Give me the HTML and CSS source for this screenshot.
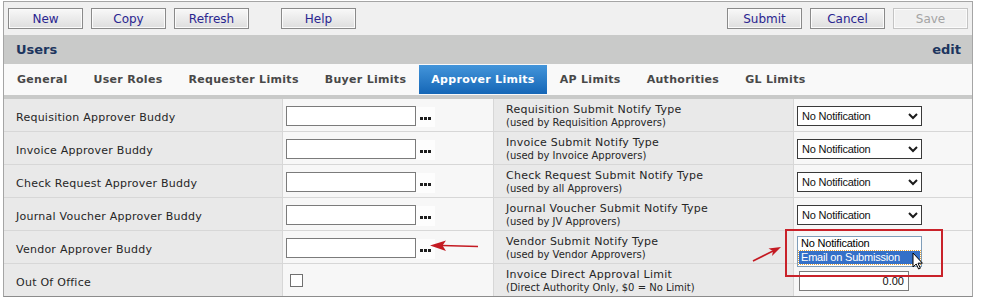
FILE: index.html
```html
<!DOCTYPE html>
<html lang="en">
  <head>
    <meta charset="UTF-8" />
    <meta name="viewport" content="width=device-width, initial-scale=1.0" />
    <title>Users - Approver Limits</title>
    <link rel="stylesheet" href="styles.css">
  </head>
  <body>
    <div class="frame">
      <div class="toolbar">
        <div class="btn-group">
          <button class="btn">New</button>
          <button class="btn">Copy</button>
          <button class="btn">Refresh</button>
          <button class="btn btn-help">Help</button>
        </div>
        <div class="btn-group">
          <button class="btn">Submit</button>
          <button class="btn">Cancel</button>
          <button class="btn" disabled>Save</button>
        </div>
      </div>

      <div class="title-bar">
        <span>Users</span>
        <span>edit</span>
      </div>

      <div class="tabs">
        <span class="tab">General</span>
        <span class="tab">User Roles</span>
        <span class="tab">Requester Limits</span>
        <span class="tab">Buyer Limits</span>
        <span class="tab active">Approver Limits</span>
        <span class="tab">AP Limits</span>
        <span class="tab">Authorities</span>
        <span class="tab">GL Limits</span>
      </div>

      <div class="form-grid">
        <div class="label">Requisition Approver Buddy</div>
        <div class="value">
          <input type="text" class="text-input" />
          <span class="lookup"><i></i><i></i><i></i></span>
        </div>
        <div class="label two-line">
          <span>Requisition Submit Notify Type</span>
          <small>(used by Requisition Approvers)</small>
        </div>
        <div class="value">
          <div class="select">No Notification <svg width="10" height="7" viewBox="0 0 10 7"><polyline points="1,1 5,5 9,1" /></svg></div>
        </div>

        <div class="label">Invoice Approver Buddy</div>
        <div class="value">
          <input type="text" class="text-input" />
          <span class="lookup"><i></i><i></i><i></i></span>
        </div>
        <div class="label two-line">
          <span>Invoice Submit Notify Type</span>
          <small>(used by Invoice Approvers)</small>
        </div>
        <div class="value">
          <div class="select">No Notification <svg width="10" height="7" viewBox="0 0 10 7"><polyline points="1,1 5,5 9,1" /></svg></div>
        </div>

        <div class="label">Check Request Approver Buddy</div>
        <div class="value">
          <input type="text" class="text-input" />
          <span class="lookup"><i></i><i></i><i></i></span>
        </div>
        <div class="label two-line">
          <span>Check Request Submit Notify Type</span>
          <small>(used by all Approvers)</small>
        </div>
        <div class="value">
          <div class="select">No Notification <svg width="10" height="7" viewBox="0 0 10 7"><polyline points="1,1 5,5 9,1" /></svg></div>
        </div>

        <div class="label">Journal Voucher Approver Buddy</div>
        <div class="value">
          <input type="text" class="text-input" />
          <span class="lookup"><i></i><i></i><i></i></span>
        </div>
        <div class="label two-line">
          <span>Journal Voucher Submit Notify Type</span>
          <small>(used by JV Approvers)</small>
        </div>
        <div class="value">
          <div class="select">No Notification <svg width="10" height="7" viewBox="0 0 10 7"><polyline points="1,1 5,5 9,1" /></svg></div>
        </div>

        <div class="label">Vendor Approver Buddy</div>
        <div class="value">
          <input type="text" class="text-input" />
          <span class="lookup"><i></i><i></i><i></i></span>
        </div>
        <div class="label two-line">
          <span>Vendor Submit Notify Type</span>
          <small>(used by Vendor Approvers)</small>
        </div>
        <div class="value open-cell">
          <ul class="listbox">
            <li>No Notification</li>
            <li class="selected">Email on Submission</li>
          </ul>
        </div>

        <div class="label">Out Of Office</div>
        <div class="value">
          <input type="checkbox" class="check" />
        </div>
        <div class="label two-line">
          <span>Invoice Direct Approval Limit</span>
          <small>(Direct Authority Only, $0 = No Limit)</small>
        </div>
        <div class="value">
          <input type="text" class="amount" value="0.00" />
        </div>
      </div>

      <!-- annotations drawn over the screenshot -->
      <div class="callout"></div>
      <svg class="marks" width="982" height="308" viewBox="0 0 982 308">
        <line x1="478" y1="246.5" x2="442" y2="245.5" class="arrow-line" />
        <polygon points="430,245.5 446,240.5 442.5,245.5 446,251" class="arrow-head" />
        <line x1="753" y1="261" x2="773" y2="251" class="arrow-line" />
        <polygon points="781,247 768.5,248.6 773,251 772,256" class="arrow-head" />
        <path d="M913 253 V267 L916.2 264 L918.6 269 L920.4 268.2 L918 263.2 H922.4 Z" class="cursor" />
      </svg>
    </div>
  </body>
</html>
```

FILE: styles.css
```css
body {
  margin: 0;
  background-color: #fff;
  font-family: "DejaVu Sans", Verdana, sans-serif;
  font-size: 11px;
  color: #262626;
}

.frame {
  position: relative;
  width: 968px;
  margin: 1px 0 0 3px;
  border: 1px solid #a5a5a5;
  border-bottom-color: #8c8c8c;
}

/* toolbar */
.toolbar {
  display: flex;
  justify-content: space-between;
  align-items: flex-start;
  height: 33px;
  padding: 6px 4px 0;
  box-sizing: border-box;
  background-color: #f0f0f0;
}

.btn-group {
  display: flex;
  gap: 8px;
}

.btn {
  width: 75px;
  height: 21px;
  padding: 0;
  border: 1px solid #8a8a8a;
  background: linear-gradient(#f8f8f8, #dedede);
  box-shadow: inset 0 0 0 1px #fbfbfb;
  font-family: "DejaVu Sans", Verdana, sans-serif;
  font-size: 12px;
  color: #2a2590;
}

.btn-help {
  margin-left: 24px;
}

.btn:disabled {
  border-color: #c4c4c4;
  color: #a4a4a4;
  background: #f0f0f0;
}

/* header */
.title-bar {
  display: flex;
  justify-content: space-between;
  align-items: center;
  height: 29px;
  padding: 0 11px 0 12px;
  background-color: #c9cac9;
  font-size: 13px;
  font-weight: bold;
  color: #1c355e;
}

/* tabs */
.tabs {
  display: flex;
  height: 31px;
  background-color: #f9f9f9;
  border-bottom: 4px solid #c9cac9;
}

.tab {
  height: 29px;
  margin-top: 1px;
  padding: 0 13px;
  line-height: 29px;
  font-weight: bold;
  letter-spacing: 0.3px;
  color: #484848;
}

.tab.active {
  padding: 0 12px;
  background: linear-gradient(#4395da, #1566b6);
  color: #fff;
}

/* form grid */
.form-grid {
  display: grid;
  grid-template-columns: 278px 210px 299px 178px;
  grid-auto-rows: 32px;
  gap: 1px;
  background-color: #d7d7d7;
}

.label {
  display: flex;
  align-items: center;
  padding: 4px 0 0 12px;
  letter-spacing: 0.25px;
  background-color: #e9e9e9;
}

.two-line {
  flex-direction: column;
  align-items: flex-start;
  justify-content: center;
  line-height: 12px;
  padding-top: 3px;
}

.two-line small {
  font-size: 10px;
  letter-spacing: 0;
  line-height: 13px;
}

.value {
  display: flex;
  align-items: center;
  padding-left: 3px;
  background-color: #f7f7f7;
}

.text-input {
  width: 130px;
  height: 20px;
  margin: 2px 0 0;
  border: 1px solid #7b7b7b;
  box-sizing: border-box;
  background-color: #fff;
}

.lookup {
  display: flex;
  align-items: flex-end;
  justify-content: center;
  gap: 1px;
  width: 19px;
  height: 20px;
  margin-top: 3px;
  padding-bottom: 7px;
  box-sizing: border-box;
  background-color: #fdfdfd;
}

.lookup i {
  width: 3px;
  height: 3px;
  background-color: #1e1e1e;
}

.select {
  display: flex;
  justify-content: space-between;
  align-items: center;
  width: 125px;
  height: 20px;
  margin-top: 2px;
  padding: 0 3px 0 4px;
  box-sizing: border-box;
  border: 1px solid #3a3a3a;
  background-color: #fff;
  font-family: "Liberation Sans", Arial, sans-serif;
  font-size: 11px;
  letter-spacing: -0.2px;
  color: #111;
}

.select polyline {
  fill: none;
  stroke: #1b1b1b;
  stroke-width: 2;
}

.open-cell {
  position: relative;
}

.listbox {
  position: absolute;
  left: 3px;
  top: 5px;
  z-index: 2;
  width: 125px;
  margin: 0;
  padding: 0 1px 2px;
  box-sizing: border-box;
  list-style: none;
  border: 1px solid #7f9db9;
  background-color: #fff;
  font-family: "Liberation Sans", Arial, sans-serif;
  font-size: 11px;
  letter-spacing: -0.2px;
  line-height: 13px;
  color: #000;
}

.listbox li {
  height: 13px;
  padding-left: 2px;
}

.listbox li.selected {
  margin-top: 1px;
  background-color: #3470c8;
  color: #fff;
  outline: 1px dotted #e2a13a;
}

.check {
  appearance: none;
  width: 13px;
  height: 13px;
  margin: 0 0 0 4px;
  border: 1px solid #707070;
  background-color: #fff;
}

.amount {
  width: 110px;
  height: 20px;
  margin: 2px 0 0 2px;
  padding: 0 4px;
  box-sizing: border-box;
  border: 1px solid #7b7b7b;
  background-color: #fff;
  text-align: right;
  font-family: "Liberation Sans", Arial, sans-serif;
  font-size: 11px;
  color: #111;
}

/* annotations */
.callout {
  position: absolute;
  left: 781px;
  top: 227px;
  z-index: 3;
  width: 158px;
  height: 48px;
  box-sizing: border-box;
  border: 2px solid #c9222a;
}

.marks {
  position: absolute;
  left: -4px;
  top: -2px;
  z-index: 4;
  pointer-events: none;
}

.arrow-line {
  stroke: #c41a22;
  stroke-width: 1.6;
}

.arrow-head {
  fill: #c41a22;
}

.cursor {
  fill: #fff;
  stroke: #000;
  stroke-width: 1;
}
```
